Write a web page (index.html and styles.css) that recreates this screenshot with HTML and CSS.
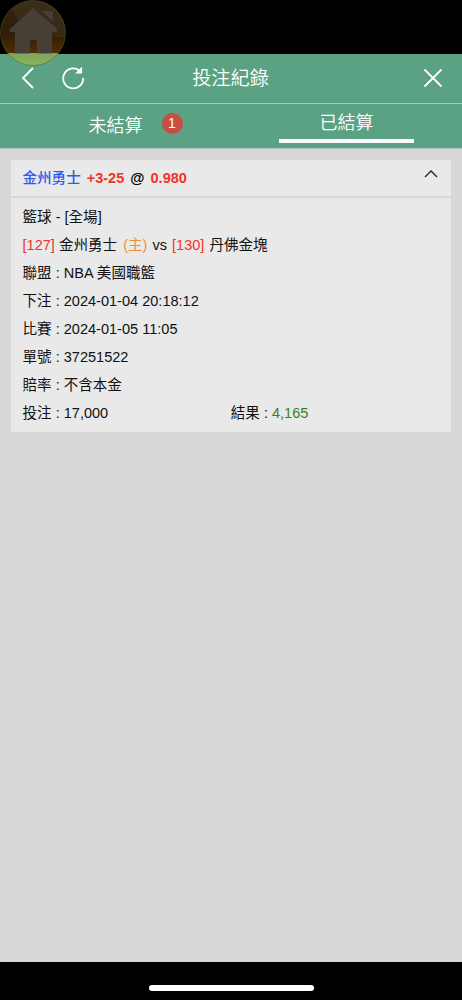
FILE: index.html
```html
<!DOCTYPE html>
<html lang="zh-Hant">
<head>
  <meta charset="UTF-8">
  <meta name="viewport" content="width=device-width, initial-scale=1.0">
  <title>投注紀錄</title>
  <link rel="stylesheet" href="styles.css">
</head>
<body>
  <div class="status-bar"></div>

  <!-- floating home button -->
  <a class="home-btn" href="#">
    <svg viewBox="0 0 66 66" width="66" height="66">
      <defs>
        <linearGradient id="ball" x1="0" y1="0" x2="0" y2="1">
          <stop offset="0" stop-color="#2e240f"/>
          <stop offset="0.5" stop-color="#2e1d08"/>
          <stop offset="0.81" stop-color="#502e04"/>
          <stop offset="0.815" stop-color="#7da453"/>
          <stop offset="1" stop-color="#87b560"/>
        </linearGradient>
      </defs>
      <circle cx="33" cy="33" r="32.5" fill="url(#ball)" stroke="#625a1f" stroke-width="0.5"/>
      <path d="M12 8C16 25 36 38 64.500 37C68 20 56 1 33 1C25 1 17 4 12 8Z" fill="#fff" fill-opacity="0.05"/>
      <path d="M33 8L42 16L53 25L57 29Q58.500 32 55 32H52V55H37V42Q37 40 35 40H31.500Q30 40 30 42V55H15V32H11Q7.500 32 10 29Z" fill="#473e36"/>
      <path d="M41.500 11H53V21Z" fill="#473e36"/>
      <path d="M15 53.500H30V55H15ZM37 53.500H52V55H37Z" fill="#83a967"/>
    </svg>
  </a>

  <header class="navbar">
    <div class="nav-left">
      <svg class="icon-back" viewBox="0 0 14 22" width="14" height="22"><path d="M12 1L2 11L12 21"/></svg>
      <svg class="icon-reload" viewBox="0 0 24 24" width="24" height="24"><path d="M22.200 12A10 10 0 1 1 18.500 4.600"/><path class="arrow" d="M20.500 2V7H15.500L17.500 5Z"/></svg>
    </div>
    <h1 class="nav-title">投注紀錄</h1>
    <svg class="icon-close" viewBox="0 0 20 20" width="20" height="20"><path d="M1.500 1.500L18.500 18.500M18.500 1.500L1.500 18.500"/></svg>
  </header>

  <nav class="tabs">
    <a class="tab" href="#"><span class="tab-text">未結算</span><span class="badge">1</span></a>
    <a class="tab active" href="#"><span class="tab-text">已結算</span></a>
  </nav>

  <main class="content">
    <section class="bet-card">
      <div class="bet-head">
        <div class="bet-pick">
          <span class="blue">金州勇士</span>
          <span class="red">+3-25</span>
          <span class="at">@</span>
          <span class="red">0.980</span>
        </div>
        <svg class="icon-up" viewBox="0 0 14 8" width="14" height="8"><path d="M1 7L7 1L13 7"/></svg>
      </div>
      <div class="bet-body">
        <div class="row">籃球 - [全場]</div>
        <div class="row teams"><span class="red">[127]</span> 金州勇士 <span class="orange">(主)</span> vs <span class="red">[130]</span> 丹佛金塊</div>
        <div class="row">聯盟 : NBA 美國職籃</div>
        <div class="row">下注 : 2024-01-04 20:18:12</div>
        <div class="row">比賽 : 2024-01-05 11:05</div>
        <div class="row">單號 : 37251522</div>
        <div class="row">賠率 : 不含本金</div>
        <div class="row split">
          <div>投注 : 17,000</div>
          <div>結果 : <span class="green">4,165</span></div>
        </div>
      </div>
    </section>
  </main>

  <footer class="bottom-bar"><div class="indicator"></div></footer>
</body>
</html>
```
FILE: styles.css
```css
* {
  box-sizing: border-box;
}

body {
  margin: 0;
  height: 1000px;
  display: flex;
  flex-direction: column;
  background: #000;
  color: #111;
  font-family: "Liberation Sans", "Noto Sans CJK TC", sans-serif;
  font-size: 14.55px;
  overflow: hidden;
}

a {
  color: inherit;
  text-decoration: none;
}

svg {
  display: block;
  fill: none;
}

.status-bar {
  height: 54px;
  flex-shrink: 0;
}

.home-btn {
  position: absolute;
  top: 0;
  left: 0;
}

/* header */
.navbar {
  height: 49px;
  flex-shrink: 0;
  display: grid;
  grid-template-columns: 1fr auto 1fr;
  align-items: center;
  padding: 0 19px 2px 21px;
  background: #5ba183;
  color: #fff;
  stroke: #fff;
  stroke-width: 1.8;
}

.nav-left {
  display: flex;
  align-items: center;
  gap: 26px;
}

.nav-title {
  margin: 0;
  padding: 3px 3px 0 0;
  font-size: 19.2px;
  font-weight: 350;
  line-height: 44px;
  stroke: none;
}

.icon-reload .arrow {
  fill: #fff;
  stroke-width: 1.2;
}

.icon-close {
  justify-self: end;
}

/* tabs */
.tabs {
  height: 46px;
  flex-shrink: 0;
  display: flex;
  border-top: 1px solid #a9cbbb;
  border-bottom: 1px solid #b0c6bc;
  background: #5ba183;
  color: #fff;
  font-size: 18px;
  font-weight: 350;
}

.tab {
  flex: 1;
  display: flex;
  justify-content: center;
  padding-top: 3px;
  line-height: 38px;
}

.tab:first-child {
  gap: 19px;
  padding-left: 40px;
}

.tab .tab-text {
  height: 38px;
}

.badge {
  width: 21px;
  height: 21px;
  margin-top: 6px;
  border-radius: 50%;
  background: #c94d43;
  font-size: 14px;
  line-height: 21px;
  text-align: center;
}

.tab.active {
  flex: none;
  width: 135px;
  height: 39px;
  margin: 0 48px;
  padding: 0;
  border-bottom: 4px solid #fff;
}

/* bet list */
.content {
  flex: 1;
  padding: 11px 11px 0;
  background: #d8d8d8;
}

.bet-card {
  background: #e9e9e9;
}

.bet-head {
  height: 38px;
  display: flex;
  justify-content: space-between;
  padding: 0 13px 0 11.5px;
  border-bottom: 2px solid #d8d8d8;
}

.bet-pick {
  display: flex;
  gap: 6px;
  line-height: 36px;
  font-weight: 700;
}

.bet-pick .blue {
  font-weight: 500;
}

.bet-pick .at {
  color: #000;
}

.icon-up {
  margin-top: 10px;
  stroke: #222;
  stroke-width: 1.3;
}

.bet-body {
  padding: 5px 12px 5px 11.5px;
}

.row {
  height: 28px;
  line-height: 28px;
  white-space: nowrap;
}

.teams .orange {
  margin: 0 1px 0 2px;
}

.teams .red + .orange + .red {
  margin: 0 1px;
}

.split {
  display: grid;
  grid-template-columns: 1fr 1fr;
}

.blue {
  color: #2b5cf0;
}

.red {
  color: #f03427;
}

.orange {
  color: #ef8f32;
}

.green {
  color: #388322;
}

/* home indicator */
.bottom-bar {
  height: 38px;
  flex-shrink: 0;
  display: flex;
  justify-content: center;
  padding-top: 23px;
}

.indicator {
  width: 165px;
  height: 6px;
  border-radius: 3px;
  background: #fff;
}
```
